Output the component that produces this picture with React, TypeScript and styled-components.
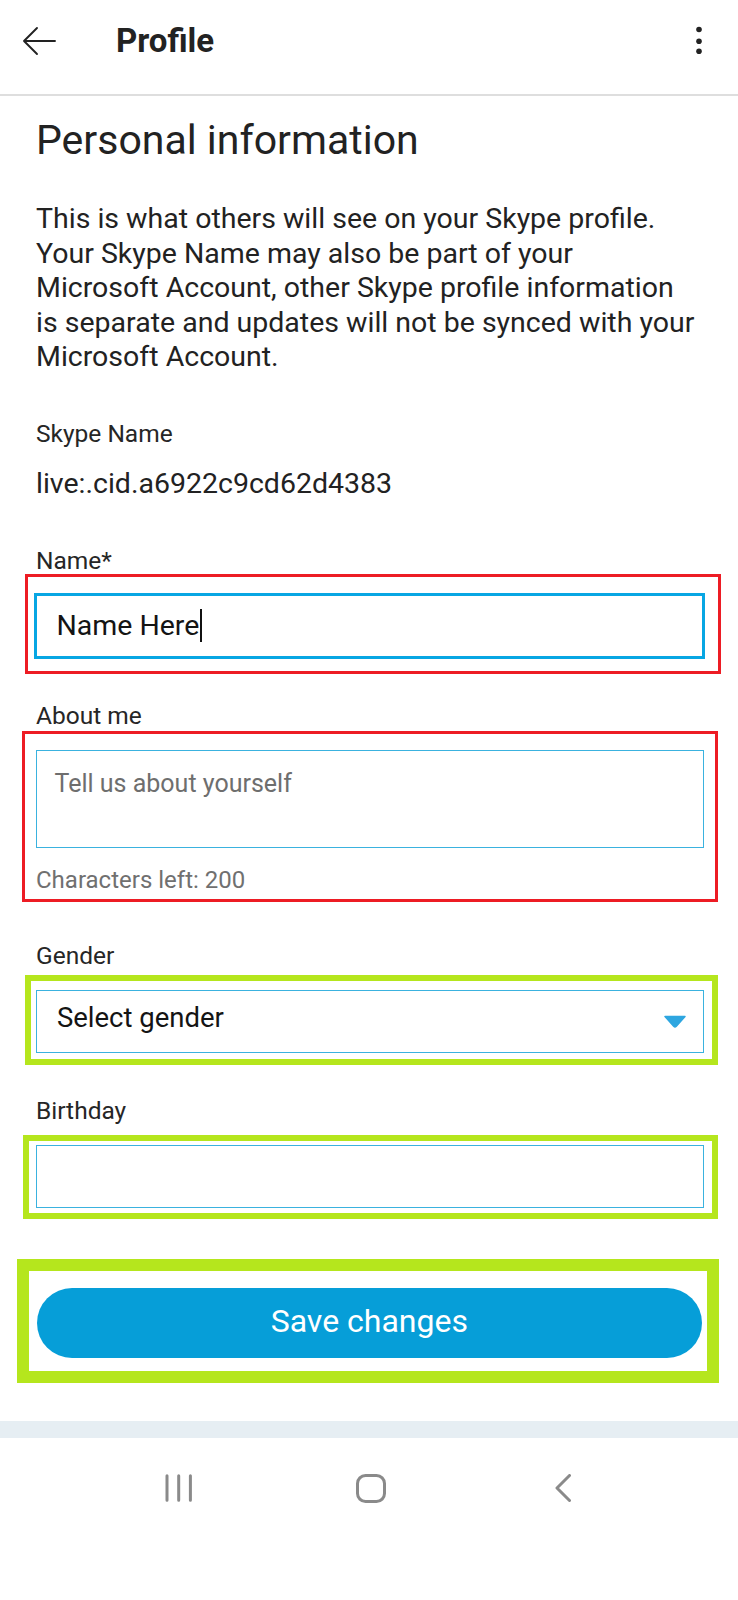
import styled, { createGlobalStyle } from "styled-components";

const GlobalStyle = createGlobalStyle`
  html, body {
    margin: 0;
    padding: 0;
    background: #ffffff;
  }
  body {
    font-family: Roboto, "Liberation Sans", Arial, sans-serif;
    color: #222222;
  }
  * {
    box-sizing: border-box;
  }
`;

const Screen = styled.div`
  width: 738px;
  min-height: 1600px;
  display: flex;
  flex-direction: column;
  background: #ffffff;
`;

const Header = styled.header`
  height: 96px;
  display: flex;
  align-items: center;
  padding: 0 34px 13px 22px;
  border-bottom: 2px solid #dedede;
`;

const Title = styled.h1`
  margin: 0 0 0 60px;
  font-size: 33px;
  line-height: 1;
  font-weight: 700;
  color: #222222;
  flex: 1;
`;

const Main = styled.main`
  padding: 20px 34px 0 36px;
`;

const Heading = styled.h2`
  margin: 0;
  font-size: 41px;
  line-height: 48px;
  font-weight: 400;
  color: #222222;
`;

const Intro = styled.p`
  margin: 38px 0 0;
  font-size: 28.5px;
  line-height: 34.5px;
  color: #222222;
  white-space: nowrap;
`;

const Label = styled.div<{ $top: number }>`
  margin-top: ${(p) => p.$top}px;
  font-size: 24.5px;
  line-height: 26px;
  color: #262626;
`;

const Value = styled.div`
  margin-top: 19.9px;
  font-size: 28.5px;
  line-height: 34px;
  color: #222222;
`;

const Highlight = styled.div<{
  $color: string;
  $w: number;
  $top: number;
  $out: [number, number];
  $pad: string;
}>`
  margin: ${(p) => p.$top}px ${(p) => p.$out[1]}px 0 ${(p) => p.$out[0]}px;
  border: ${(p) => p.$w}px solid ${(p) => p.$color};
  padding: ${(p) => p.$pad};
`;

const Field = styled.div<{ $h: number; $focused?: boolean }>`
  height: ${(p) => p.$h}px;
  display: flex;
  align-items: center;
  padding: 0 16px 0 ${(p) => (p.$focused ? 19 : 19.9)}px;
  border: ${(p) => (p.$focused ? "3px solid #07a6e3" : "1.5px solid #3ab2df")};
  background: #ffffff;
`;

const FieldText = styled.span<{ $size: number; $lift?: number }>`
  font-size: ${(p) => p.$size}px;
  line-height: 1;
  color: #141414;
  margin-bottom: ${(p) => p.$lift ?? 0}px;
  flex: ${(p) => (p.$lift ? 1 : "none")};
`;

const Caret = styled.span`
  width: 1.5px;
  height: 33px;
  margin-left: 1px;
  background: #111111;
`;

const TextArea = styled.div`
  height: 97.3px;
  padding: 17.6px 16px 0 17.5px;
  border: 1.5px solid #3ab2df;
  font-size: 25px;
  line-height: 30px;
  color: #6e6e6e;
`;

const Counter = styled.div`
  margin-top: 18.8px;
  font-size: 24px;
  line-height: 28px;
  color: #707070;
`;

const SaveButton = styled.button`
  width: 100%;
  height: 70px;
  border: none;
  border-radius: 35px;
  padding: 0 0 4px;
  background: #069ed8;
  color: #ffffff;
  font-family: Roboto, "Liberation Sans", Arial, sans-serif;
  font-size: 32px;
  line-height: 1;
  display: flex;
  align-items: center;
  justify-content: center;
`;

const Band = styled.div`
  margin-top: 37.5px;
  height: 17px;
  background: #e6eef3;
`;

const NavBar = styled.nav`
  height: 162px;
  display: flex;
  justify-content: center;
  align-items: flex-start;
  padding: 36px 0 0 3px;
  background: #ffffff;
`;

const NavSlot = styled.div`
  width: 192px;
  display: flex;
  justify-content: center;
`;

const BackArrow = () => (
  <svg width="34" height="30" viewBox="0 0 34 30" fill="none">
    <path
      d="M33 15H2M15 2L2 15L15 28"
      stroke="#222222"
      strokeWidth="1.9"
      strokeLinecap="round"
      strokeLinejoin="round"
    />
  </svg>
);

const Kebab = () => (
  <svg width="10" height="30" viewBox="0 0 10 30">
    <circle cx="5" cy="3.5" r="2.8" fill="#222222" />
    <circle cx="5" cy="15.2" r="2.8" fill="#222222" />
    <circle cx="5" cy="25.3" r="2.8" fill="#222222" />
  </svg>
);

const DropTriangle = () => (
  <svg width="24" height="13" viewBox="0 0 24 13">
    <path
      d="M2 1.5H22L13.3 11.2Q12 12.5 10.7 11.2Z"
      fill="#2ea6e0"
      stroke="#2ea6e0"
      strokeWidth="1.5"
      strokeLinejoin="round"
    />
  </svg>
);

const RecentIcon = () => (
  <svg width="28" height="28" viewBox="0 0 28 28" fill="none">
    <path
      d="M2 1.8V26.2M13.7 1.8V26.2M25.4 1.8V26.2"
      stroke="#8a8a8a"
      strokeWidth="3"
      strokeLinecap="round"
    />
  </svg>
);

const HomeIcon = () => (
  <svg width="30" height="29" viewBox="0 0 30 29" fill="none">
    <rect x="1.5" y="1.5" width="27" height="26" rx="8" stroke="#8a8a8a" strokeWidth="3" />
  </svg>
);

const BackIcon = () => (
  <svg width="16" height="28" viewBox="0 0 16 28" fill="none">
    <path
      d="M14.5 1.5L2 14L14.5 26.5"
      stroke="#8a8a8a"
      strokeWidth="3"
      strokeLinecap="round"
      strokeLinejoin="round"
    />
  </svg>
);

export default function App() {
  return (
    <Screen>
      <GlobalStyle />
      <Header>
        <BackArrow />
        <Title>Profile</Title>
        <Kebab />
      </Header>

      <Main>
        <Heading>Personal information</Heading>
        <Intro>
          This is what others will see on your Skype profile.
          <br />
          Your Skype Name may also be part of your
          <br />
          Microsoft Account, other Skype profile information
          <br />
          is separate and updates will not be synced with your
          <br />
          Microsoft Account.
        </Intro>

        <Label $top={46.85}>Skype Name</Label>
        <Value>live:.cid.a6922c9cd62d4383</Value>

        <Label $top={46.65}>Name*</Label>
        <Highlight
          $color="#ed1c24"
          $w={3}
          $top={0}
          $out={[-11.5, -16.7]}
          $pad="16px 12.7px 12px 6.9px"
        >
          <Field $h={66} $focused>
            <FieldText $size={28.5}>Name Here</FieldText>
            <Caret />
          </Field>
        </Highlight>

        <Label $top={29.35}>About me</Label>
        <Highlight
          $color="#ed1c24"
          $w={3}
          $top={1.85}
          $out={[-14.4, -13.6]}
          $pad="16.2px 11.1px 4.9px 11.4px"
        >
          <TextArea>Tell us about yourself</TextArea>
          <Counter>Characters left: 200</Counter>
        </Highlight>

        <Label $top={40.95}>Gender</Label>
        <Highlight
          $color="#b5e61d"
          $w={6}
          $top={5.85}
          $out={[-11.5, -13.6]}
          $pad="9.2px 8.1px 6.4px 5.5px"
        >
          <Field $h={62.6}>
            <FieldText $size={27.5} $lift={7}>
              Select gender
            </FieldText>
            <DropTriangle />
          </Field>
        </Highlight>

        <Label $top={32.95}>Birthday</Label>
        <Highlight
          $color="#b5e61d"
          $w={6}
          $top={11.35}
          $out={[-13.4, -13.6]}
          $pad="4px 8.1px 5px 7.4px"
        >
          <Field $h={62.3} />
        </Highlight>

        <Highlight
          $color="#b5e61d"
          $w={12.5}
          $top={40.7}
          $out={[-19.5, -15]}
          $pad="16.8px 5.5px 13.2px 8.6px"
        >
          <SaveButton>Save changes</SaveButton>
        </Highlight>
      </Main>

      <Band />
      <NavBar>
        <NavSlot>
          <RecentIcon />
        </NavSlot>
        <NavSlot>
          <HomeIcon />
        </NavSlot>
        <NavSlot>
          <BackIcon />
        </NavSlot>
      </NavBar>
    </Screen>
  );
}
